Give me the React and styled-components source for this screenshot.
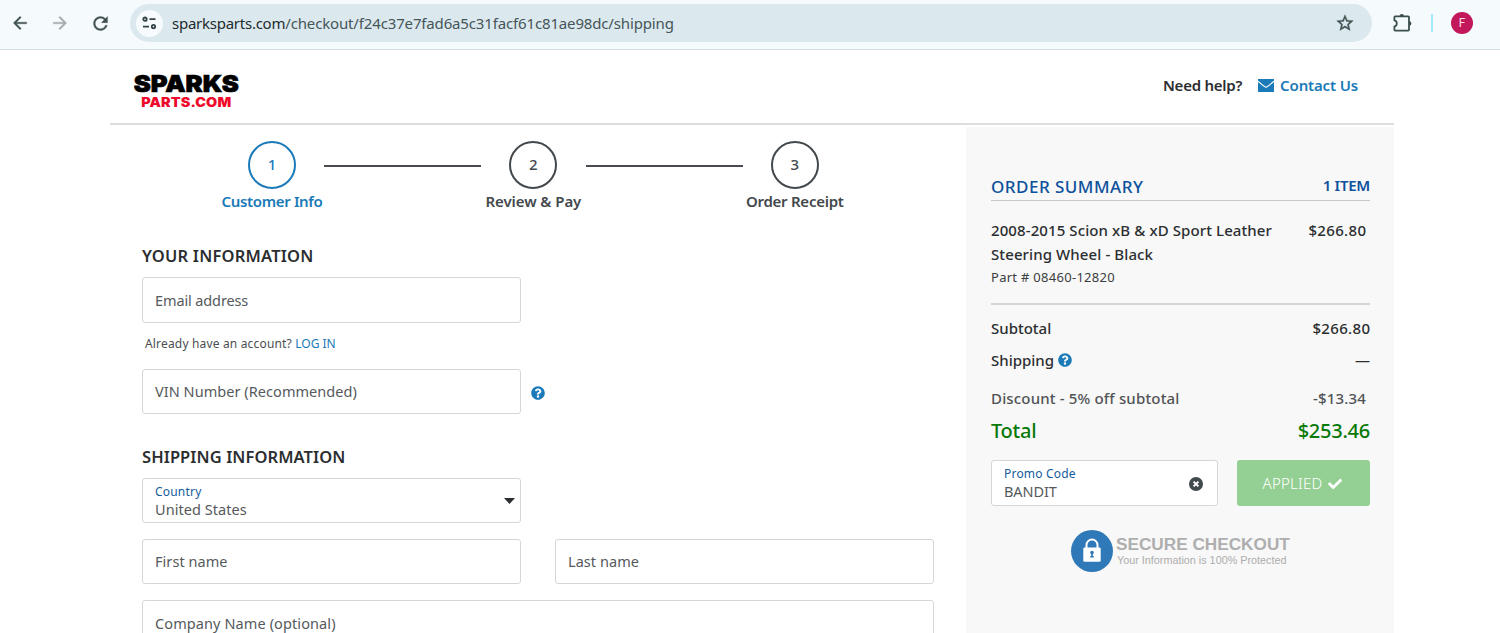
import React from "react";
import styled, { createGlobalStyle } from "styled-components";
import { MdArrowBack, MdArrowForward, MdRefresh, MdStarBorder } from "react-icons/md";
import { FaQuestionCircle, FaCheck } from "react-icons/fa";

const Global = createGlobalStyle`
  * { box-sizing: border-box; }
  html, body { margin: 0; height: 633px; overflow: hidden; background: #fff; }
  body { font-family: "Noto Sans", "Open Sans", sans-serif; color: #2b2e30; }
  svg { display: block; flex: none; }
`;

const Page = styled.div`
  height: 633px;
  overflow: hidden;
  display: flex;
  flex-direction: column;
`;

/* Browser toolbar */
const Toolbar = styled.div`
  flex: none;
  height: 50px;
  padding: 0 27px 3px 10px;
  display: flex;
  align-items: center;
  background: #f5fafd;
  border-bottom: 1px solid #d3e1e3;
  color: #40514f;
`;
const NavIcons = styled.div`
  flex: none;
  display: flex;
  gap: 20px;
  width: 120px;
  path:not([fill="none"]) { stroke: currentColor; stroke-width: 0.4px; }
`;
const AddressBar = styled.div`
  flex: none;
  display: flex;
  align-items: center;
  width: 1242px;
  height: 38px;
  padding: 0 17px 0 6px;
  border-radius: 19px;
  background: #dbe9ef;
  > svg path:not([fill="none"]) { stroke: currentColor; stroke-width: 0.4px; }
`;
const SiteBadge = styled.div`
  display: flex;
  align-items: center;
  justify-content: center;
  width: 27px;
  height: 27px;
  margin-right: 9px;
  border-radius: 50%;
  background: #f7fbfd;
`;
const Url = styled.div`
  flex: 1;
  font-size: 15px;
  line-height: 20px;
  letter-spacing: -0.15px;
  color: #465558;
  white-space: nowrap;
  b { font-weight: 400; color: #1d2b2e; letter-spacing: -0.25px; }
`;
const Tools = styled.div`
  display: flex;
  align-items: center;
  flex: 1;
  padding-left: 20px;
`;
const Separator = styled.div`
  flex: none;
  width: 2px;
  height: 18px;
  margin: 0 18px 0 18px;
  background: #a4e9f7;
`;
const Avatar = styled.div`
  flex: none;
  width: 22px;
  height: 22px;
  border-radius: 50%;
  background: #c2185b;
  color: #fbdbe8;
  font: 12px/22px Roboto, sans-serif;
  text-align: center;
`;

/* Store page */
const Container = styled.div`
  flex: 1;
  width: 1284px;
  margin-left: 110px;
  display: flex;
  flex-direction: column;
`;
const Header = styled.header`
  flex: none;
  height: 75px;
  padding: 22px 36px 0 24px;
  display: flex;
  justify-content: space-between;
  border-bottom: 2px solid #dcdddd;
`;
const Logo = styled.div`
  width: 104px;
  display: flex;
  flex-direction: column;
  align-items: center;
  font-family: Inter, sans-serif;
  font-weight: 900;
  white-space: nowrap;
`;
const LogoTop = styled.div`
  font-size: 23.5px;
  line-height: 24px;
  color: #000;
  -webkit-text-stroke: 0.7px #000;
  transform: scaleX(1.09);
`;
const LogoBottom = styled.div`
  font-size: 13.2px;
  line-height: 12px;
  letter-spacing: 0.1px;
  color: #ee0a2c;
  transform: scaleX(1.09);
`;
const Help = styled.div`
  display: flex;
  align-items: center;
  height: 26px;
  font-size: 15px;
  font-weight: 600;
  letter-spacing: -0.25px;
`;
const ContactLink = styled.a`
  display: flex;
  align-items: center;
  gap: 6px;
  margin-left: 16px;
  color: #1b7ab8;
  letter-spacing: -0.15px;
`;
const Columns = styled.div`
  flex: 1;
  display: flex;
`;
const Main = styled.main`
  width: 856px;
  padding: 16px 32px 0;
`;
const Steps = styled.div`
  display: flex;
  padding-left: 78px;
`;
const Step = styled.div`
  width: 104px;
  display: flex;
  flex-direction: column;
  align-items: center;
  color: ${(p) => (p.$active ? "#1b7ab8" : "#43484c")};
  font-weight: 600;
`;
const StepCircle = styled.div`
  width: 48px;
  height: 48px;
  border: 2px solid currentColor;
  border-radius: 50%;
  font-size: 15px;
  line-height: 43px;
  font-weight: 500;
  text-align: center;
`;
const StepLabel = styled.div`
  margin-top: 1px;
  font-size: 15px;
  line-height: 22px;
  letter-spacing: ${(p) => p.$spacing}px;
  white-space: nowrap;
`;
const StepLine = styled.div`
  width: 157px;
  height: 2px;
  margin: 24px 0 0 0.4px;
  background: #484c50;
`;
const SectionTitle = styled.h2`
  margin: ${(p) => p.$top}px 0 0;
  font-size: 16.5px;
  line-height: 24px;
  font-weight: 600;
  letter-spacing: ${(p) => p.$spacing}px;
`;
const FieldRow = styled.div`
  display: flex;
  align-items: center;
  gap: ${(p) => p.$gap || 34}px;
  margin-top: ${(p) => p.$top || 0}px;
  color: #1b7ab8;
  > svg { margin-top: 2px; }
`;
const Field = styled.div`
  display: flex;
  align-items: center;
  justify-content: space-between;
  width: ${(p) => p.$width || 379}px;
  height: ${(p) => p.$height || 45}px;
  padding: 0 ${(p) => p.$right || 5}px 1px 12px;
  border: 1px solid #d5d7d7;
  border-radius: 3px;
  background: #fff;
  color: #55595c;
  font-size: 14.5px;
  line-height: 18px;
  letter-spacing: ${(p) => p.$spacing ?? 0.05}px;
  svg { margin-top: 2px; }
`;
const FieldLabel = styled.div`
  margin-bottom: -1px;
  font-size: 12px;
  line-height: 18px;
  letter-spacing: 0.2px;
  color: #145c9e;
`;
const LoginHint = styled.div`
  margin: 12px 0 0 3px;
  font-size: 12px;
  line-height: 17px;
  letter-spacing: 0.17px;
  color: #4a4e51;
  a { color: #1b7ab8; letter-spacing: 0; }
`;

const Summary = styled.aside`
  width: 428px;
  margin-top: 2px;
  padding: 47px 24px 0 25px;
  background: #f8f8f8;
`;
const SummaryHead = styled.div`
  display: flex;
  justify-content: space-between;
  height: 27px;
  border-bottom: 1px solid #c6c7c8;
  color: #0d519c;
  font-size: 17px;
  line-height: 26px;
  font-weight: 500;
  letter-spacing: 0.48px;
`;
const ItemCount = styled.span`
  font-size: 15px;
  line-height: 23px;
  font-weight: 600;
  letter-spacing: -0.25px;
`;
const Product = styled.div`
  display: flex;
  justify-content: space-between;
  height: 104px;
  padding: 17px 4px 0 0;
  border-bottom: 2px solid #d4d5d6;
  font-size: 15px;
  line-height: 24px;
  font-weight: 500;
  letter-spacing: 0.1px;
  white-space: nowrap;
`;
const Price = styled.div`
  letter-spacing: 0.35px;
  margin-right: -0.4px;
`;
const PartNumber = styled.div`
  font-size: 13px;
  line-height: 23px;
  font-weight: 400;
  letter-spacing: 0.28px;
  color: #3b3e40;
`;
const SumRow = styled.div`
  display: flex;
  justify-content: space-between;
  align-items: center;
  height: 24px;
  margin-top: ${(p) => p.$top}px;
  padding-right: ${(p) => p.$inset || 0}px;
  font-size: ${(p) => (p.$total ? 20 : 15)}px;
  font-weight: 500;
  letter-spacing: ${(p) => p.$spacing || 0}px;
  color: ${(p) => (p.$total ? "#087a08" : p.$muted ? "#505355" : "#2b2e30")};
  span { display: flex; align-items: center; gap: 4px; }
  svg { color: #1b7ab8; }
`;
const PromoRow = styled.div`
  display: flex;
  justify-content: space-between;
  margin-top: 18px;
`;
const Applied = styled.button`
  display: flex;
  align-items: center;
  justify-content: center;
  gap: 6px;
  width: 133px;
  height: 46px;
  padding: 0 2px 0 0;
  border: 0;
  border-radius: 3px;
  background: #94cf93;
  color: #fff;
  font-family: inherit;
  font-size: 15px;
  font-weight: 300;
  letter-spacing: 0.25px;
  svg { margin-top: 1px; }
`;
const Secure = styled.div`
  display: flex;
  align-items: center;
  margin: 24px 0 0 79.5px;
  gap: 3.5px;
  font-family: "Liberation Sans", Arial, sans-serif;
  white-space: nowrap;
`;
const SecureTitle = styled.div`
  margin-top: 3px;
  font-size: 17.2px;
  line-height: 18px;
  font-weight: 700;
  color: #aeaeae;
`;
const SecureText = styled.div`
  margin: 1px 0 4px 1px;
  font-size: 10.8px;
  line-height: 13px;
  color: #adadad;
`;

const TuneIcon = () => (
  <svg width="15" height="14" viewBox="0 0 15 14" fill="none" stroke="#36444a" strokeWidth="1.8">
    <circle cx="3" cy="3.2" r="1.7" />
    <path d="M7.5 3.2h6M1 10.6h6" />
    <circle cx="11.5" cy="10.6" r="1.7" />
  </svg>
);
const PuzzleIcon = () => (
  <svg width="21" height="20" viewBox="0 0 21 20">
    <path
      d="M3.2 3.4h13a.8.8 0 0 1 .8.8v12.6a.8.8 0 0 1-.8.8h-13a.8.8 0 0 1-.8-.8v-3.4c3.2-.6 3.2-5.4 0-6V4.200a.8.8 0 0 1 .8-.8z"
      fill="none" stroke="#3b4f4b" strokeWidth="1.8" strokeLinejoin="round"
    />
    <path d="M7.600 3.200a2.200 2.200 0 0 1 4.400 0zM17.200 8.200a2.200 2.200 0 0 1 0 4.400z" fill="#3b4f4b" />
  </svg>
);
const EnvelopeIcon = () => (
  <svg width="16" height="13" viewBox="0 0 16 13">
    <path d="M0 0h16v13H0z" fill="#1b7ab8" />
    <path d="M0 2.2l5.5 4.6L8 8.4l2.5-1.6L16 2.2" fill="none" stroke="#fff" strokeWidth="1.1" />
  </svg>
);
const ClearIcon = () => (
  <svg width="14" height="14" viewBox="0 0 14 14">
    <circle cx="7" cy="7" r="7" fill="#414a4c" />
    <path d="M4.6 4.6l4.8 4.8M9.4 4.6L4.6 9.4" stroke="#fff" strokeWidth="2" />
  </svg>
);
const LockIcon = () => (
  <svg width="42" height="42" viewBox="0 0 42 42">
    <circle cx="21" cy="21" r="21" fill="#3079b8" />
    <path d="M15.500 19v-4a5.500 5.500 0 0 1 11 0v4" fill="none" stroke="#fff" strokeWidth="2" />
    <rect x="12.300" y="17.500" width="17.400" height="14.200" rx="1.200" fill="#fff" />
    <circle cx="21" cy="22.600" r="1.800" fill="#3079b8" />
    <path d="M20.200 23h1.600v3h1v1.500h-3.600V26h1z" fill="#3079b8" />
  </svg>
);
const Caret = () => (
  <svg width="11" height="6" viewBox="0 0 11 6">
    <path d="M0 0h11L5.5 6z" fill="#2b2e30" />
  </svg>
);

export default function App() {
  return (
    <Page>
      <Global />
      <Toolbar>
        <NavIcons>
          <MdArrowBack size={20} />
          <MdArrowForward size={20} color="#a5abad" />
          <MdRefresh size={21} />
        </NavIcons>
        <AddressBar>
          <SiteBadge><TuneIcon /></SiteBadge>
          <Url><b>sparksparts.com</b>/checkout/f24c37e7fad6a5c31facf61c81ae98dc/shipping</Url>
          <MdStarBorder size={20} />
        </AddressBar>
        <Tools>
          <PuzzleIcon />
          <Separator />
          <Avatar>F</Avatar>
        </Tools>
      </Toolbar>
      <Container>
        <Header>
          <Logo>
            <LogoTop>SPARKS</LogoTop>
            <LogoBottom>PARTS.COM</LogoBottom>
          </Logo>
          <Help>
            Need help?
            <ContactLink><EnvelopeIcon />Contact Us</ContactLink>
          </Help>
        </Header>
        <Columns>
          <Main>
            <Steps>
              <Step $active><StepCircle>1</StepCircle><StepLabel $spacing={-0.35}>Customer Info</StepLabel></Step>
              <StepLine />
              <Step><StepCircle>2</StepCircle><StepLabel $spacing={-0.08}>Review &amp; Pay</StepLabel></Step>
              <StepLine />
              <Step><StepCircle>3</StepCircle><StepLabel $spacing={-0.25}>Order Receipt</StepLabel></Step>
            </Steps>
            <SectionTitle $top={32} $spacing={0.2}>YOUR INFORMATION</SectionTitle>
            <FieldRow $top={9}><Field $height={46} $spacing={-0.12}>Email address</Field></FieldRow>
            <LoginHint>Already have an account? <a>LOG IN</a></LoginHint>
            <FieldRow $top={17} $gap={10}>
              <Field>VIN Number (Recommended)</Field>
              <FaQuestionCircle size={14} />
            </FieldRow>
            <SectionTitle $top={31} $spacing={0.08}>SHIPPING INFORMATION</SectionTitle>
            <FieldRow $top={9}>
              <Field>
                <div><FieldLabel>Country</FieldLabel>United States</div>
                <Caret />
              </Field>
            </FieldRow>
            <FieldRow $top={16}>
              <Field>First name</Field>
              <Field>Last name</Field>
            </FieldRow>
            <FieldRow $top={16}><Field $width={792} $height={46} $spacing={0.1}>Company Name (optional)</Field></FieldRow>
          </Main>
          <Summary>
            <SummaryHead>ORDER SUMMARY<ItemCount>1 ITEM</ItemCount></SummaryHead>
            <Product>
              <div>
                2008-2015 Scion xB &amp; xD Sport Leather<br />Steering Wheel - Black
                <PartNumber>Part # 08460-12820</PartNumber>
              </div>
              <Price>$266.80</Price>
            </Product>
            <SumRow $top={11}><span>Subtotal</span><Price>$266.80</Price></SumRow>
            <SumRow $top={8}><span>Shipping <FaQuestionCircle size={14} /></span><span>—</span></SumRow>
            <SumRow $top={14} $muted $inset={4} $spacing={0.16}><span>Discount - 5% off subtotal</span><span>-$13.34</span></SumRow>
            <SumRow $top={8} $total $spacing={-0.25}><span>Total</span><span>$253.46</span></SumRow>
            <PromoRow>
              <Field $width={227} $height={46} $right={14} $spacing={-0.1}>
                <div><FieldLabel>Promo Code</FieldLabel>BANDIT</div>
                <ClearIcon />
              </Field>
              <Applied>APPLIED <FaCheck size={14} /></Applied>
            </PromoRow>
            <Secure>
              <LockIcon />
              <div>
                <SecureTitle>SECURE CHECKOUT</SecureTitle>
                <SecureText>Your Information is 100% Protected</SecureText>
              </div>
            </Secure>
          </Summary>
        </Columns>
      </Container>
    </Page>
  );
}
